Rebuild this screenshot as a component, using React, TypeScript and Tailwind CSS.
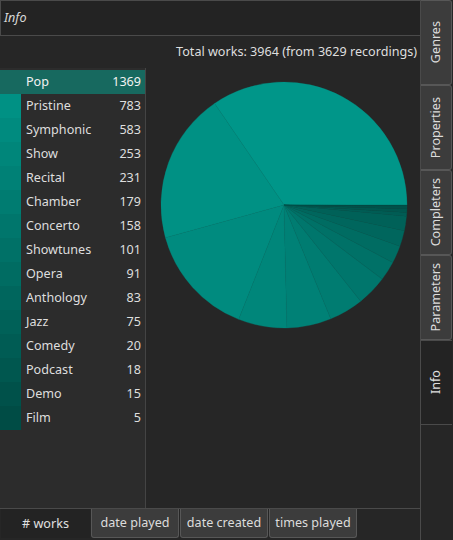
import React from 'react';

const genres: [string, number][] = [
  ['Pop', 1369],
  ['Pristine', 783],
  ['Symphonic', 583],
  ['Show', 253],
  ['Recital', 231],
  ['Chamber', 179],
  ['Concerto', 158],
  ['Showtunes', 101],
  ['Opera', 91],
  ['Anthology', 83],
  ['Jazz', 75],
  ['Comedy', 20],
  ['Podcast', 18],
  ['Demo', 15],
  ['Film', 5],
];

// teal gradient, brightest for the biggest slice
const colorAt = (i: number) => {
  const t = i / (genres.length - 1);
  const g = Math.round(150 - t * 74);
  const b = Math.round(137 - t * 68);
  return `rgb(0,${g},${b})`;
};

const PieChart: React.FC = () => {
  const total = genres.reduce((s, [, n]) => s + n, 0);
  const cx = 124;
  const cy = 124;
  const r = 123;
  let start = 0;
  return (
    <svg width={248} height={248} viewBox="0 0 248 248">
      {genres.map(([name, n], i) => {
        const sweep = (n / total) * Math.PI * 2;
        const a0 = start;
        const a1 = start + sweep;
        start = a1;
        const x0 = cx + r * Math.cos(a0);
        const y0 = cy - r * Math.sin(a0);
        const x1 = cx + r * Math.cos(a1);
        const y1 = cy - r * Math.sin(a1);
        const large = sweep > Math.PI ? 1 : 0;
        return (
          <path
            key={name}
            d={`M${cx},${cy} L${x0},${y0} A${r},${r} 0 ${large} 0 ${x1},${y1} Z`}
            fill={colorAt(i)}
            stroke={colorAt(i)}
            strokeWidth={0.3}
          />
        );
      })}
    </svg>
  );
};

const sideTabs = ['Genres', 'Properties', 'Completers', 'Parameters'];
const bottomTabs = ['date played', 'date created', 'times played'];

export default function App() {
  return (
    <div
      className="w-[453px] h-[540px] flex bg-[#262626] text-[12.6px] text-[#dedede] overflow-hidden"
      style={{ fontFamily: '"Noto Sans", "Open Sans", sans-serif' }}
    >
      <div className="w-[421px] h-full flex flex-col border-r border-[#4a4a4a]">
        <div className="h-[36px] shrink-0 bg-[#232323] border-b border-t border-l border-[#4a4a4a] flex items-center px-[3px]">
          <span className="italic text-[#d8d8d8]">Info</span>
        </div>

        <div className="flex-1 flex flex-col min-h-0">
          <div className="h-[32px] shrink-0 flex items-center justify-end pr-[3px] pt-px">
            Total works: 3964 (from 3629 recordings)
          </div>
          <div className="flex-1 flex min-h-0">
            <div className="w-[146px] shrink-0 bg-[#2c2c2c] border-r border-[#444] pt-[2px]">
              {genres.map(([name, n], i) => (
                <div
                  key={name}
                  className={`h-[24px] flex items-center ${i === 0 ? 'bg-[#17695f] text-[#f2f2f2]' : ''}`}
                >
                  <div
                    className="w-[21px] h-full shrink-0"
                    style={{ background: i === 0 ? '#17695f' : colorAt(i) }}
                  />
                  <span className="pl-[5px] flex-1">{name}</span>
                  <span className="pr-[4px]">{n}</span>
                </div>
              ))}
            </div>
            <div className="flex-1 flex justify-start pt-[13px] pl-[14px]">
              <PieChart />
            </div>
          </div>
        </div>

        <div className="h-[32px] shrink-0 border-t border-[#4a4a4a] flex items-start gap-px pl-px">
          <div className="w-[89px] h-[29px] flex items-center justify-center bg-[#232323] text-[#e0e0e0] pt-px">
            # works
          </div>
          {bottomTabs.map((t) => (
            <div
              key={t}
              className="w-[88px] h-[29px] flex items-center justify-center bg-[#3c3c3c] border border-t-0 border-[#575757] rounded-b-[3px] text-[#dcdcdc] pt-px"
            >
              {t}
            </div>
          ))}
        </div>
      </div>

      <div className="w-[32px] h-full flex flex-col">
        {sideTabs.map((t) => (
          <div
            key={t}
            className="h-[85px] w-[31px] shrink-0 flex items-center justify-center bg-[#3c3c3c] border border-l-0 border-[#575757] rounded-r-[3px]"
          >
            <span className="[writing-mode:vertical-rl] rotate-180 text-[#dcdcdc]">{t}</span>
          </div>
        ))}
        <div className="h-[85px] w-[31px] shrink-0 flex items-center justify-center bg-[#232323] border-y border-[#4a4a4a]">
          <span className="[writing-mode:vertical-rl] rotate-180 text-[#e0e0e0]">Info</span>
        </div>
        <div className="flex-1" />
      </div>
    </div>
  );
}
